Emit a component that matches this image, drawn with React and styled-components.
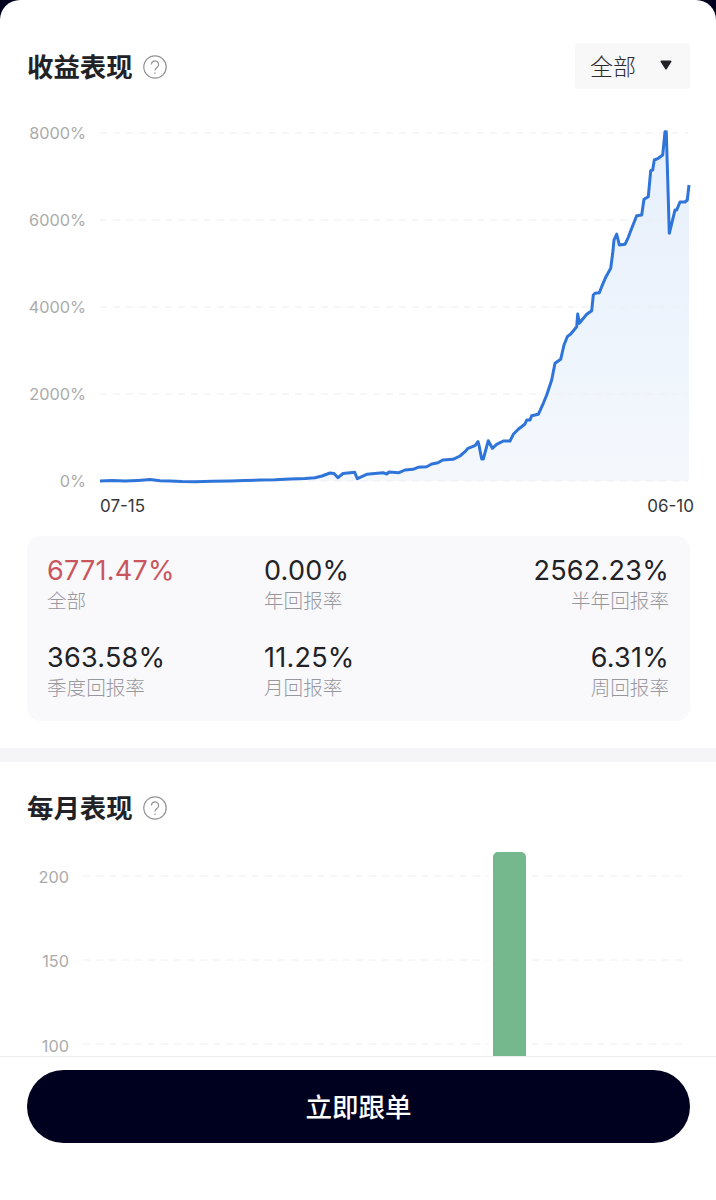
import React from "react";
import styled, { createGlobalStyle } from "styled-components";

const GlobalStyle = createGlobalStyle`
  html, body {
    margin: 0;
    padding: 0;
    background: #00001f;
  }
  * {
    box-sizing: border-box;
  }
`;

const Page = styled.div`
  height: 1200px;
  display: flex;
  flex-direction: column;
  overflow: hidden;
  background: #fff;
  border-radius: 20px 20px 0 0;
  font-family: Inter, "Noto Sans CJK SC", sans-serif;
  color: #222226;
`;

const Content = styled.main`
  flex: 1;
  min-height: 0;
  overflow: hidden;
`;

const Section = styled.section`
  padding: ${(p) => p.$top}px 26px 0 27px;
`;

const SectionHeader = styled.header`
  display: flex;
  align-items: center;
  justify-content: space-between;
  min-height: 46px;
`;

const TitleGroup = styled.div`
  display: flex;
  align-items: center;
  gap: 10px;
`;

const Title = styled.h2`
  margin: 0;
  padding-top: 2px;
  font-size: 26.4px;
  line-height: 36px;
  font-weight: 600;
  color: #222226;
`;

const HelpGlyph = styled.svg`
  width: 24px;
  height: 24px;
  margin-top: 2px;
  fill: none;
  stroke: #929292;
  stroke-width: 1.2;
`;

const RangeSelect = styled.div`
  width: 115px;
  height: 46px;
  display: flex;
  align-items: center;
  justify-content: space-between;
  padding: 0 18px 3px 15px;
  background: #f8f8f9;
  border-radius: 4px;
  font-size: 23px;
  font-weight: 300;
  color: #2c2c30;
`;

const Caret = styled.svg`
  width: 12px;
  height: 10px;
  fill: #222226;
`;

const ChartRow = styled.div`
  display: flex;
  gap: 14px;
  margin-top: ${(p) => p.$top}px;
`;

const YAxis = styled.div`
  width: ${(p) => p.$width}px;
  flex: none;
  display: flex;
  flex-direction: column;
  gap: ${(p) => p.$gap}px;
  padding-top: ${(p) => p.$top}px;
`;

const YLabel = styled.span`
  height: 20px;
  font-size: 16.3px;
  line-height: 20px;
  text-align: right;
  color: #ababab;
`;

const Plot = styled.svg`
  flex: none;
  display: block;
  overflow: visible;
`;

const XAxis = styled.div`
  display: flex;
  justify-content: space-between;
  margin: 5px -4px 0 73px;
  font-size: 17px;
  line-height: 20px;
  color: #37373b;
`;

const StatsCard = styled.div`
  display: grid;
  grid-template-columns: 217px 1fr auto;
  row-gap: 27px;
  margin-top: 20px;
  padding: 20px 21px 18px 20px;
  background: #f9f9fc;
  border-radius: 14px;
`;

const Stat = styled.div`
  text-align: ${(p) => (p.$right ? "right" : "left")};
`;

const StatValue = styled.div`
  font-size: 27px;
  line-height: 30px;
  letter-spacing: 0.25px;
  color: ${(p) => (p.$accent ? "#c9565f" : "#222226")};
`;

const StatLabel = styled.div`
  font-size: 19.6px;
  font-weight: 300;
  line-height: 30px;
  color: #97979e;
`;

const Divider = styled.div`
  height: 14px;
  margin-top: 27px;
  background: #f5f5f7;
`;

const Footer = styled.footer`
  flex: none;
  height: 144px;
  padding: 13px 26px 0 27px;
  border-top: 1px solid #ededf0;
  background: #fff;
`;

const FollowButton = styled.button`
  display: block;
  width: 100%;
  height: 73px;
  padding: 0 0 2px;
  border: none;
  border-radius: 37px;
  background: #00001f;
  color: #fff;
  font-family: inherit;
  font-size: 26.5px;
  font-weight: 500;
`;

const linePoints = [
  [100, 481], [112, 480.6], [125, 481], [138, 480.4], [150, 479.6], [160, 480.8], [170, 481],
  [182, 481.5], [195, 481.7], [212, 481.2], [230, 481], [245, 480.6], [260, 480], [275, 479.8],
  [290, 479], [305, 478.4], [315, 477.7], [322, 476], [330, 473], [334, 473.5], [338, 477.7],
  [343, 473.5], [354.7, 472.3], [357.3, 478.7], [366.7, 474.3], [383, 472.7], [386.7, 474],
  [389, 472], [399, 472.7], [405, 470], [413, 469.3], [418, 467.3], [426.7, 466.7], [431.7, 464],
  [438, 462.7], [442.7, 460], [453, 459.3], [460, 456], [465, 451.7], [468, 448.3],
  [475, 445.7], [478, 441.7], [479.3, 446.7], [481.7, 459], [483.3, 459], [488.3, 440.7],
  [492.3, 448.3], [496.7, 444.3], [503.3, 441], [510, 441], [513.3, 434.3], [518.3, 429.3],
  [525, 424], [526.7, 420], [530, 420], [531.7, 415.7], [538.3, 414.3], [543.3, 403.3],
  [546.7, 395], [551.7, 380], [555, 363.3], [560.7, 359.3], [564, 345], [567.3, 336.7],
  [570.7, 334], [576.7, 326.7], [577.7, 314], [579.3, 323.3], [586.7, 314.3], [591.7, 310.7],
  [593.3, 295], [595, 293.3], [599.3, 292.7], [601.7, 286.7], [606, 276.7], [610.7, 268.3],
  [612.7, 253.3], [614, 240], [616.7, 234], [619.3, 245], [625, 244.3], [628.3, 237.3],
  [631.7, 228.3], [636.7, 215.7], [641.7, 215], [644, 199.3], [648.3, 196.7], [650.7, 170.7],
  [652.7, 170], [654.3, 160], [658.3, 158.3], [662.7, 155], [665, 131.7], [666.3, 131.7],
  [669.3, 233.3], [675, 210], [676.7, 210], [680, 202], [685, 202], [687.3, 200], [689, 185],
];

const linePath = "M" + linePoints.map(([x, y]) => `${x} ${y}`).join("L");
const areaPath = `${linePath}L689 481L100 481Z`;

const returnTicks = ["8000%", "6000%", "4000%", "2000%", "0%"];
const returnGrid = [133, 220, 307, 394, 481];
const monthTicks = ["200", "150", "100"];
const monthGrid = [876, 960, 1044];

const stats = [
  { value: "6771.47%", label: "全部", accent: true },
  { value: "0.00%", label: "年回报率" },
  { value: "2562.23%", label: "半年回报率", right: true },
  { value: "363.58%", label: "季度回报率" },
  { value: "11.25%", label: "月回报率" },
  { value: "6.31%", label: "周回报率", right: true },
];

function HelpIcon() {
  return (
    <HelpGlyph viewBox="0 0 24 24">
      <circle cx="12" cy="12" r="11.2" />
      <path d="M8.4 9.4a3.6 3.6 0 1 1 5.8 2.9c-1.4 1-2.2 1.6-2.2 3.3" />
      <path d="M12 17.6v1.4" />
    </HelpGlyph>
  );
}

function ReturnChart() {
  return (
    <ChartRow $top={34}>
      <YAxis $width={59} $gap={67} $top={0}>
        {returnTicks.map((tick) => (
          <YLabel key={tick}>{tick}</YLabel>
        ))}
      </YAxis>
      <Plot width="590" height="368" viewBox="100 123 590 368">
        <defs>
          <linearGradient id="returnFill" x1="0" y1="0" x2="0" y2="1">
            <stop offset="0" stopColor="#e6effb" />
            <stop offset="1" stopColor="#f4f8fd" />
          </linearGradient>
        </defs>
        <path d={areaPath} fill="url(#returnFill)" />
        {returnGrid.map((y) => (
          <line key={y} x1="100" x2="688" y1={y} y2={y} stroke="#eeeef0" strokeDasharray="7 6" />
        ))}
        <path d={linePath} fill="none" stroke="#2f74d8" strokeWidth="3" strokeLinejoin="round" />
      </Plot>
    </ChartRow>
  );
}

function MonthlyChart() {
  return (
    <ChartRow $top={16}>
      <YAxis $width={42} $gap={64.3} $top={21}>
        {monthTicks.map((tick) => (
          <YLabel key={tick}>{tick}</YLabel>
        ))}
      </YAxis>
      <Plot width="607" height="300" viewBox="83 846 607 300">
        {monthGrid.map((y) => (
          <g key={y} stroke="#eeeef0" strokeDasharray="7 6">
            <line x1="83" x2="489" y1={y} y2={y} />
            <line x1="532" x2="688" y1={y} y2={y} />
          </g>
        ))}
        <rect x="493" y="852" width="33" height="290" rx="5" fill="#75b88d" />
      </Plot>
    </ChartRow>
  );
}

export default function App() {
  return (
    <>
      <GlobalStyle />
      <Page>
        <Content>
          <Section $top={43}>
            <SectionHeader>
              <TitleGroup>
                <Title>收益表现</Title>
                <HelpIcon />
              </TitleGroup>
              <RangeSelect>
                全部
                <Caret viewBox="0 0 12 10">
                  <path d="M1.5 0.5h9a1 1 0 0 1 .8 1.6L6.8 9a1 1 0 0 1-1.6 0L.7 2.1A1 1 0 0 1 1.5 .5z" />
                </Caret>
              </RangeSelect>
            </SectionHeader>
            <ReturnChart />
            <XAxis>
              <span>07-15</span>
              <span>06-10</span>
            </XAxis>
            <StatsCard>
              {stats.map((stat) => (
                <Stat key={stat.label} $right={stat.right}>
                  <StatValue $accent={stat.accent}>{stat.value}</StatValue>
                  <StatLabel>{stat.label}</StatLabel>
                </Stat>
              ))}
            </StatsCard>
          </Section>
          <Divider />
          <Section $top={22}>
            <SectionHeader>
              <TitleGroup>
                <Title>每月表现</Title>
                <HelpIcon />
              </TitleGroup>
            </SectionHeader>
            <MonthlyChart />
          </Section>
        </Content>
        <Footer>
          <FollowButton>立即跟单</FollowButton>
        </Footer>
      </Page>
    </>
  );
}
